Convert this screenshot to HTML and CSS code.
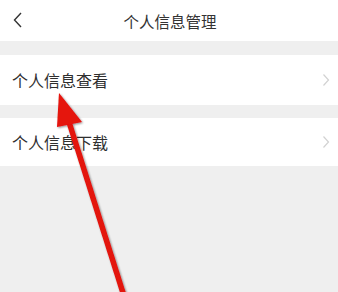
FILE: index.html
```html
<!DOCTYPE html>
<html lang="zh">
<head>
<meta charset="utf-8">
<link rel="stylesheet" href="styles.css">
</head>
<body>
<div class="page">
  <header class="nav">
    <svg class="back" width="12" height="18" viewBox="0 0 12 18"><path d="M9 2 L2.5 9 L9 16" fill="none" stroke="#333" stroke-width="1.4"/></svg>
    <div class="title">个人信息管理</div>
  </header>
  <div class="gap"></div>
  <div class="row r1"><span class="label">个人信息查看</span><svg class="chev" width="8" height="14" viewBox="0 0 8 14"><path d="M1.5 1.5 L6.5 7 L1.5 12.5" fill="none" stroke="#d2d2d2" stroke-width="1.2"/></svg></div>
  <div class="gap g2"></div>
  <div class="row r2"><span class="label">个人信息下载</span><svg class="chev" width="8" height="14" viewBox="0 0 8 14"><path d="M1.5 1.5 L6.5 7 L1.5 12.5" fill="none" stroke="#d2d2d2" stroke-width="1.2"/></svg></div>
  <svg class="arrow" width="338" height="292" viewBox="0 0 338 292">
    <defs>
      <filter id="sh" x="-20%" y="-20%" width="140%" height="140%">
        <feGaussianBlur in="SourceAlpha" stdDeviation="1"/>
        <feOffset dx="0.8" dy="0.8"/>
        <feComponentTransfer><feFuncA type="linear" slope="0.45"/></feComponentTransfer>
        <feMerge><feMergeNode/><feMergeNode in="SourceGraphic"/></feMerge>
      </filter>
    </defs>
    <g filter="url(#sh)">
      <line x1="124" y1="296" x2="69" y2="122" stroke="#e3120e" stroke-width="5.5"/>
      <polygon points="59,93 57,127 82,122" fill="#e5120e"/>
    </g>
  </svg>
</div>
</body>
</html>
```
FILE: styles.css
```css
html, body {
  margin: 0;
  padding: 0;
}
body {
  width: 338px;
  height: 292px;
  overflow: hidden;
  background: #efefef;
  font-family: "Noto Sans CJK SC", "Noto Sans", sans-serif;
  color: #333;
}
.page {
  position: relative;
  width: 338px;
  height: 292px;
}
.nav {
  height: 41px;
  background: #fff;
  display: flex;
  align-items: center;
  justify-content: center;
  position: relative;
}
.back {
  position: absolute;
  left: 12px;
  top: 11px;
}
.title {
  font-size: 15.5px;
  color: #333;
  margin-left: 2px;
}
.gap {
  height: 14px;
}
.g2 {
  height: 13px;
}
.row {
  background: #fff;
  display: flex;
  align-items: center;
  justify-content: space-between;
  padding: 0 8px 0 12px;
}
.r1 {
  height: 50px;
}
.r2 {
  height: 48px;
}
.label {
  font-size: 16px;
  color: #2f2f2f;
  margin-top: -1px;
}
.arrow {
  position: absolute;
  left: 0;
  top: 0;
  pointer-events: none;
}
```
